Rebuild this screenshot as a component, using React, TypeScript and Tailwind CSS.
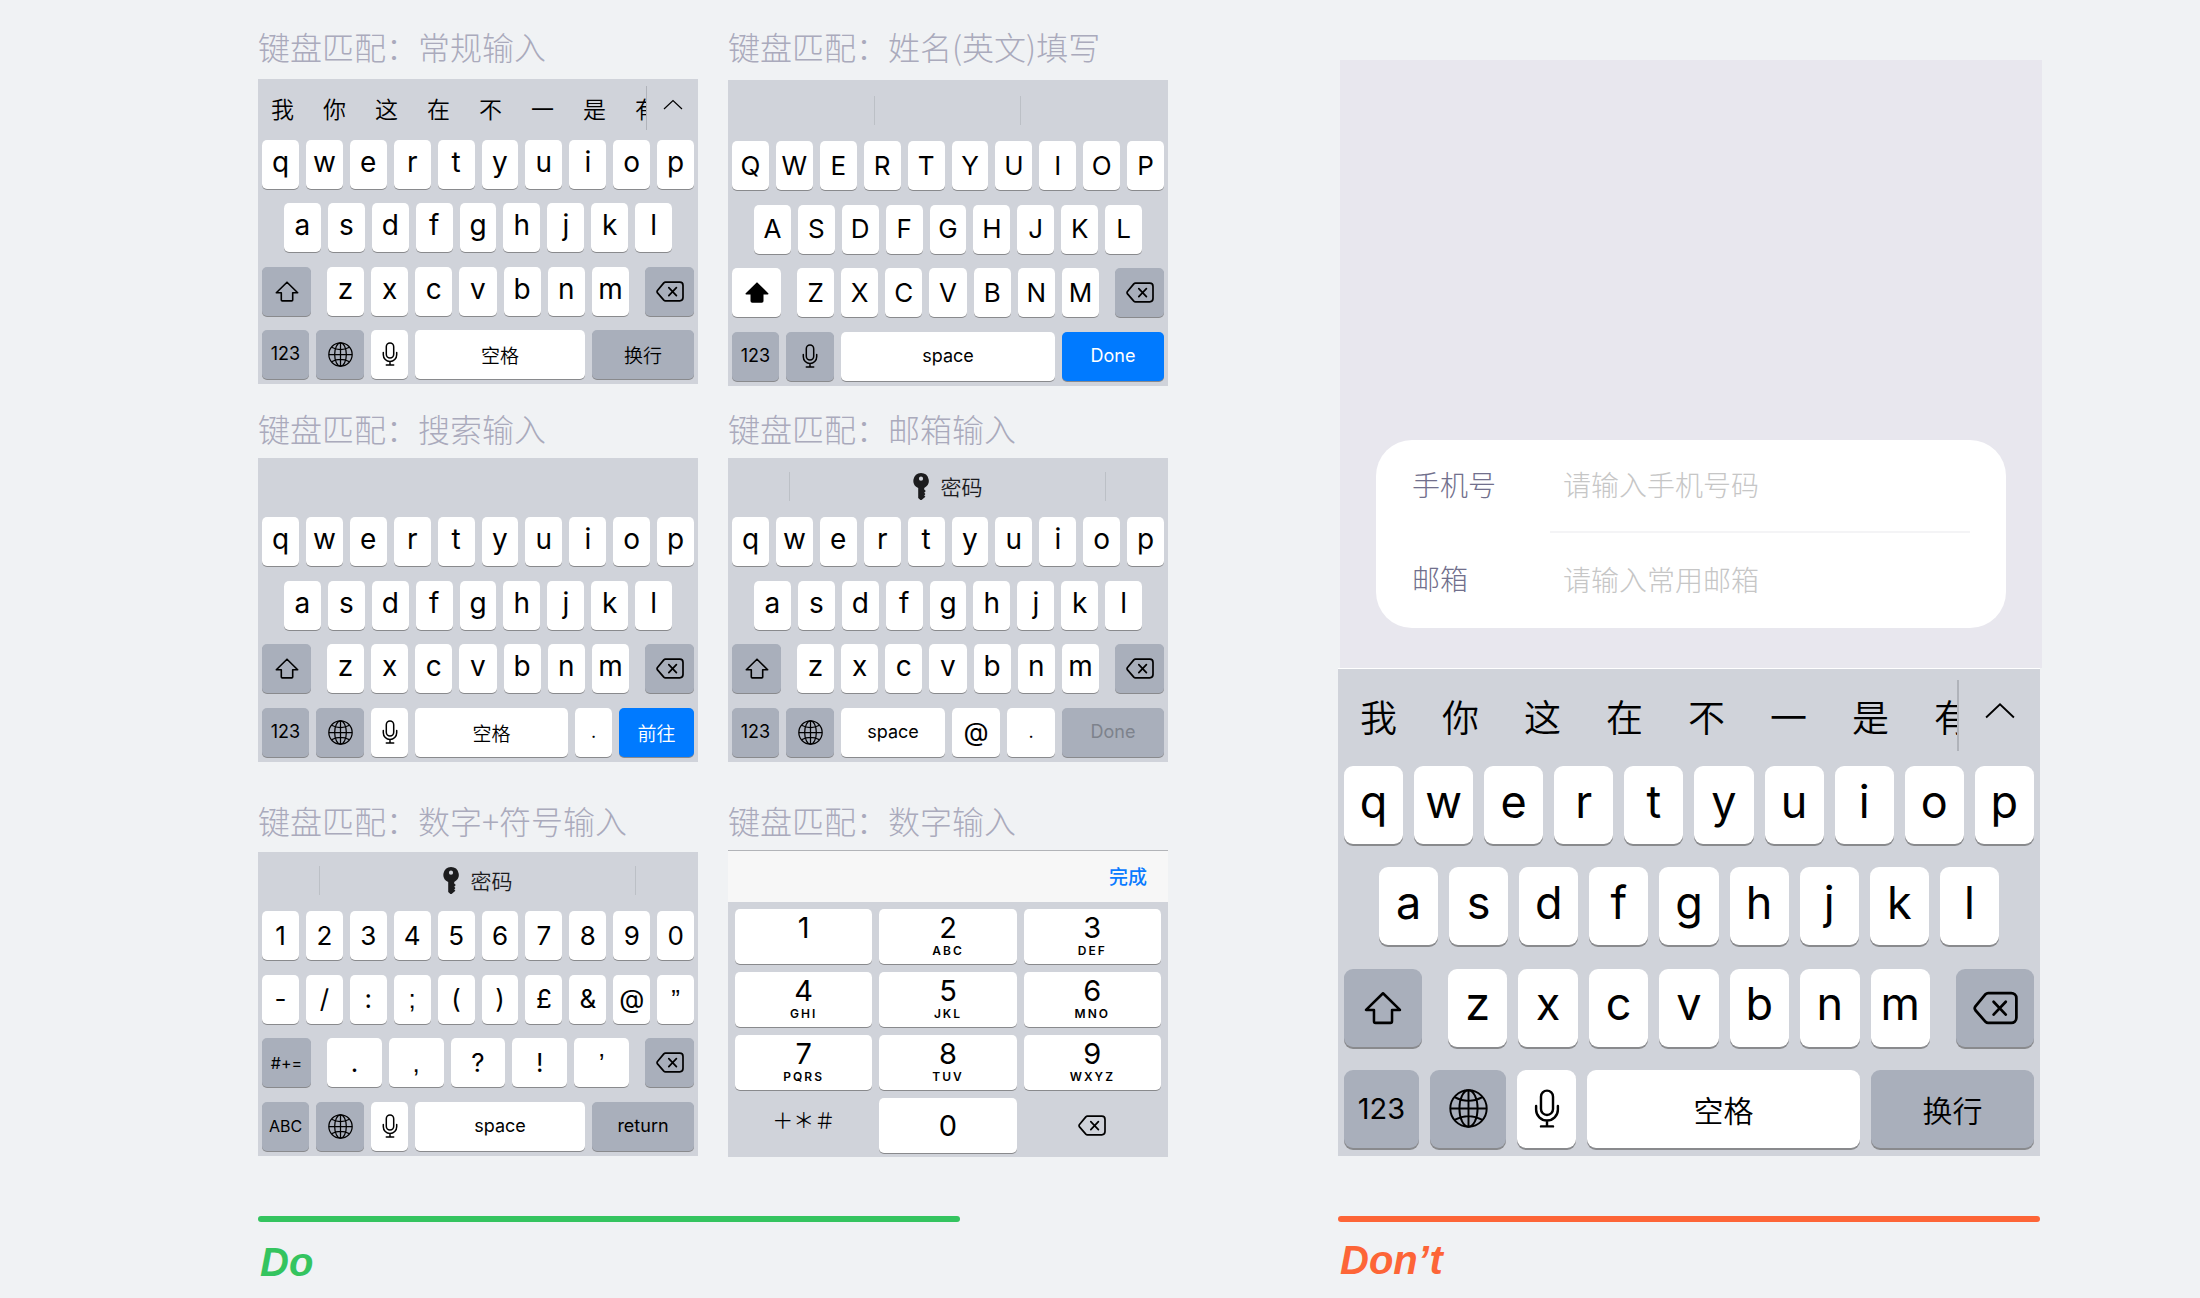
import type { ReactNode } from "react";
import clsx from "clsx";

type Size = "sm" | "lg";
type Tone = "light" | "dark" | "blue" | "disabled";

const sizes = {
  sm: {
    key: "h-[49px] rounded-[5px] shadow-[0_1px_0_#898a8d]",
    lower: "text-[28px] pb-[5px]",
    upper: "text-[26px]",
    label: "text-[18px]",
    cjk: "text-[19px]",
    small: "text-[16px]",
    gap: "gap-[7px]",
    keys: "px-1 pb-[5px]",
    indent: "px-[22px]",
    middle: "mx-4 gap-[7px]",
    shift: "w-[49px]",
    switch: "w-[47px]",
    globe: "w-[48px]",
    mic: "w-[37px]",
    enter: "w-[102px]",
  },
  lg: {
    key: "h-[78px] rounded-[9px] shadow-[0_2px_0_#898a8d]",
    lower: "text-[45px] pb-[8px]",
    upper: "text-[42px]",
    label: "text-[29px]",
    cjk: "text-[30px]",
    small: "text-[26px]",
    gap: "gap-[11px]",
    keys: "px-[6px] pb-[8px]",
    indent: "px-[35px]",
    middle: "mx-[26px] gap-[11px]",
    shift: "w-[78px]",
    switch: "w-[75px]",
    globe: "w-[76px]",
    mic: "w-[59px]",
    enter: "w-[163px]",
  },
};

const tones: Record<Tone, string> = {
  light: "bg-white text-black",
  dark: "bg-[#a9afbb] text-black",
  blue: "bg-[#007aff] text-white",
  disabled: "bg-[#a9afbb] text-[#7d828c]",
};

const cjkFont = "font-['Noto_Sans_CJK_SC',sans-serif]";

const ShiftIcon = ({ size, filled }: { size: Size; filled?: boolean }) => (
  <svg
    viewBox="0 0 24 21"
    className={size === "lg" ? "w-[38px] h-[34px]" : "w-6 h-[21px]"}
    fill={filled ? "currentColor" : "none"}
    stroke="currentColor"
    strokeWidth="1.6"
    strokeLinejoin="round"
  >
    <path d="M12 1.2 1.3 11.7h5v7.2q0 1 1 1h9.4q1 0 1-1v-7.2h5Z" />
  </svg>
);

const DeleteIcon = ({ size }: { size: Size }) => (
  <svg
    viewBox="0 0 28 21"
    className={size === "lg" ? "w-[45px] h-[34px]" : "w-7 h-[21px]"}
    fill="none"
    stroke="currentColor"
    strokeWidth="1.7"
    strokeLinejoin="round"
    strokeLinecap="round"
  >
    <path d="M9.4 1.2h14.4a3.2 3.2 0 0 1 3.2 3.2v12.2a3.2 3.2 0 0 1-3.2 3.2H9.4q-.9 0-1.6-.7l-6.3-7.2q-.9-1.2 0-2.4l6.3-7.6q.7-.7 1.6-.7Z" />
    <path d="m12.8 6.6 7.6 8M20.4 6.6l-7.6 8" />
  </svg>
);

const GlobeIcon = ({ size }: { size: Size }) => (
  <svg
    viewBox="0 0 24 24"
    className={size === "lg" ? "w-[39px] h-[39px]" : "w-[25px] h-[25px]"}
    fill="none"
    stroke="currentColor"
    strokeWidth="1.2"
  >
    <circle cx="12" cy="12" r="11.2" />
    <ellipse cx="12" cy="12" rx="5.6" ry="11.2" />
    <path d="M12 .8v22.4M.8 12h22.4M3.4 5q8.6 4.6 17.2 0M3.4 19q8.6-4.6 17.2 0" />
  </svg>
);

const MicIcon = ({ size }: { size: Size }) => (
  <svg
    viewBox="0 0 16 24"
    className={size === "lg" ? "w-[26px] h-[39px]" : "w-4 h-6"}
    fill="none"
    stroke="currentColor"
    strokeWidth="1.5"
    strokeLinecap="round"
  >
    <rect x="4.3" y="1" width="7.4" height="15" rx="3.7" />
    <path d="M1.3 10.5v2.2a6.7 6.7 0 0 0 13.4 0v-2.2M8 19.4v3.4M4.3 23h7.4" />
  </svg>
);

const KeyIcon = () => (
  <svg viewBox="0 0 16 27" className="w-4 h-[27px]" fill="currentColor">
    <path
      fillRule="evenodd"
      d="M8 0a7.8 7.8 0 0 1 3.2 14.9v1.5l1.6 1.6-1.6 1.7 1.2 1.4-1.2 1.3 1.2 1.4L8.6 27H7.4l-2.2-1.9V15A7.8 7.8 0 0 1 8 0Zm0 3.6a2.1 2.1 0 1 0 0 4.2 2.1 2.1 0 0 0 0-4.2Z"
    />
  </svg>
);

const ChevronIcon = ({ size }: { size: Size }) => (
  <svg
    viewBox="0 0 20 11"
    className={size === "lg" ? "w-[32px] h-[17px]" : "w-5 h-[11px]"}
    fill="none"
    stroke="currentColor"
    strokeWidth="1.2"
  >
    <path d="m1 10 9-8.5L19 10" />
  </svg>
);

type KeyProps = {
  size: Size;
  tone?: Tone;
  text?: "lower" | "upper" | "label" | "cjk" | "small";
  className?: string;
  label?: string;
  children: ReactNode;
};

const Key = ({ size, tone = "light", text = "label", className, label, children }: KeyProps) => (
  <button
    type="button"
    aria-label={label}
    disabled={tone === "disabled"}
    className={clsx(
      "flex items-center justify-center leading-none",
      sizes[size].key,
      sizes[size][text],
      tones[tone],
      text === "cjk" ? cjkFont : "font-['Inter',sans-serif]",
      text === "cjk" ? "font-[350]" : "font-[380]",
      className ?? "flex-1 min-w-0",
    )}
  >
    {children}
  </button>
);

const Letters = ({ size, letters }: { size: Size; letters: string }) => {
  const text = /[a-z]/.test(letters) ? "lower" : "upper";
  return (
    <>
      {letters.split("").map((letter) => (
        <Key key={letter} size={size} text={text}>
          {/* Inter draws these as straight wedges */}
          {"”’,;".includes(letter) ? (
            <span className="font-['Liberation_Sans',sans-serif]">{letter}</span>
          ) : (
            letter
          )}
        </Key>
      ))}
    </>
  );
};

type KeyboardProps = {
  size?: Size;
  height: string;
  barHeight: string;
  bar?: ReactNode;
  rows: string[];
  shift?: ReactNode;
  children: ReactNode;
};

const Keyboard = ({ size = "sm", height, barHeight, bar, rows, shift, children }: KeyboardProps) => {
  const s = sizes[size];
  return (
    <div className={clsx("flex flex-col bg-[#d0d3da]", height)}>
      <div className={clsx("flex shrink-0", barHeight)}>{bar}</div>
      <div className={clsx("flex-1 flex flex-col justify-between", s.keys)}>
        <div className={clsx("flex", s.gap)}>
          <Letters size={size} letters={rows[0]} />
        </div>
        <div className={clsx("flex", s.gap, rows[1].length < 10 && s.indent)}>
          <Letters size={size} letters={rows[1]} />
        </div>
        <div className="flex">
          {shift ?? (
            <Key size={size} tone="dark" className={s.shift} label="shift">
              <ShiftIcon size={size} />
            </Key>
          )}
          <div className={clsx("flex-1 flex", s.middle)}>
            <Letters size={size} letters={rows[2]} />
          </div>
          <Key size={size} tone="dark" className={s.shift} label="delete">
            <DeleteIcon size={size} />
          </Key>
        </div>
        <div className={clsx("flex", s.gap)}>{children}</div>
      </div>
    </div>
  );
};

const SwitchKey = ({ size = "sm" }: { size?: Size }) => (
  <Key size={size} tone="dark" className={sizes[size].switch}>
    123
  </Key>
);

const GlobeKey = ({ size = "sm" }: { size?: Size }) => (
  <Key size={size} tone="dark" className={sizes[size].globe} label="globe">
    <GlobeIcon size={size} />
  </Key>
);

const MicKey = ({ size = "sm" }: { size?: Size }) => (
  <Key size={size} className={sizes[size].mic} label="dictation">
    <MicIcon size={size} />
  </Key>
);

const words = ["我", "你", "这", "在", "不", "一", "是", "有"];

const WordBar = ({ size }: { size: Size }) => {
  const lg = size === "lg";
  return (
    <div className={clsx("flex-1 min-w-0 flex font-[350]", cjkFont)}>
      <div
        className={clsx(
          "flex-1 min-w-0 overflow-hidden flex items-center pb-[3px]",
          lg ? "pl-[22px] gap-[45px] text-[37px]" : "pl-[13px] gap-[29px] text-[23px]",
        )}
      >
        {words.map((word) => (
          <button key={word} type="button" className="shrink-0 leading-none">
            {word}
          </button>
        ))}
      </div>
      <button
        type="button"
        aria-label="more"
        className={clsx(
          "flex justify-center border-l border-[#b0b3ba]",
          lg
            ? "w-[83px] h-[71px] mt-[11px] pt-[22px] border-l-2"
            : "w-[52px] h-[44px] mt-[7px] pt-[13px]",
        )}
      >
        <ChevronIcon size={size} />
      </button>
    </div>
  );
};

const PasswordBar = () => (
  <div className="flex-1 flex items-center justify-between pl-[61px] pr-[62px] pb-[3px]">
    <div className="w-px h-[29px] bg-[#bcc0c6]"></div>
    <button
      type="button"
      className={clsx("flex items-center gap-3 text-[21px] leading-none font-[350] text-[#1c1c1e]", cjkFont)}
    >
      <KeyIcon />
      密码
    </button>
    <div className="w-px h-[29px] bg-[#bcc0c6]"></div>
  </div>
);

const ChineseKeyboard = ({ size = "sm" }: { size?: Size }) => (
  <Keyboard
    size={size}
    height={size === "lg" ? "h-[487px]" : "h-[305px]"}
    barHeight={size === "lg" ? "h-[97px]" : "h-[61px]"}
    bar={<WordBar size={size} />}
    rows={["qwertyuiop", "asdfghjkl", "zxcvbnm"]}
  >
    <SwitchKey size={size} />
    <GlobeKey size={size} />
    <MicKey size={size} />
    <Key size={size} text="cjk">
      空格
    </Key>
    <Key size={size} tone="dark" text="cjk" className={sizes[size].enter}>
      换行
    </Key>
  </Keyboard>
);

const NameKeyboard = () => (
  <Keyboard
    height="h-[306px]"
    barHeight="h-[61px]"
    bar={
      <div className="flex-1 grid grid-cols-3 items-center">
        <div className="h-[29px] border-r border-[#bcc0c6]"></div>
        <div className="h-[29px] border-r border-[#bcc0c6]"></div>
      </div>
    }
    rows={["QWERTYUIOP", "ASDFGHJKL", "ZXCVBNM"]}
    shift={
      <Key size="sm" className="w-[49px]" label="shift">
        <ShiftIcon size="sm" filled />
      </Key>
    }
  >
    <SwitchKey />
    <Key size="sm" tone="dark" className="w-[48px]" label="dictation">
      <MicIcon size="sm" />
    </Key>
    <Key size="sm">space</Key>
    <Key size="sm" tone="blue" className="w-[102px]">
      Done
    </Key>
  </Keyboard>
);

const SearchKeyboard = () => (
  <Keyboard
    height="h-[304px]"
    barHeight="h-[59px]"
    rows={["qwertyuiop", "asdfghjkl", "zxcvbnm"]}
  >
    <SwitchKey />
    <GlobeKey />
    <MicKey />
    <Key size="sm" text="cjk">
      空格
    </Key>
    <Key size="sm" className="w-[37px]">
      .
    </Key>
    <Key size="sm" tone="blue" text="cjk" className="w-[75px]">
      前往
    </Key>
  </Keyboard>
);

const EmailKeyboard = () => (
  <Keyboard
    height="h-[304px]"
    barHeight="h-[59px]"
    bar={<PasswordBar />}
    rows={["qwertyuiop", "asdfghjkl", "zxcvbnm"]}
  >
    <SwitchKey />
    <GlobeKey />
    <Key size="sm">space</Key>
    <Key size="sm" text="upper" className="w-[48px]">
      @
    </Key>
    <Key size="sm" className="w-[48px]">
      .
    </Key>
    <Key size="sm" tone="disabled" className="w-[102px]">
      Done
    </Key>
  </Keyboard>
);

const SymbolKeyboard = () => (
  <Keyboard
    height="h-[304px]"
    barHeight="h-[59px]"
    bar={<PasswordBar />}
    rows={["1234567890", "-/:;()£&@”", ".,?!’"]}
    shift={
      <Key size="sm" tone="dark" text="small" className="w-[49px]">
        #+=
      </Key>
    }
  >
    <Key size="sm" tone="dark" text="small" className="w-[47px]">
      ABC
    </Key>
    <GlobeKey />
    <MicKey />
    <Key size="sm">space</Key>
    <Key size="sm" tone="dark" className="w-[102px]">
      return
    </Key>
  </Keyboard>
);

const digits = [
  ["1", ""],
  ["2", "ABC"],
  ["3", "DEF"],
  ["4", "GHI"],
  ["5", "JKL"],
  ["6", "MNO"],
  ["7", "PQRS"],
  ["8", "TUV"],
  ["9", "WXYZ"],
];

const NumberPad = () => (
  <div className="font-['Inter',sans-serif]">
    <div className="h-[52px] flex items-center justify-end pr-[21px] pb-[2px] bg-[#f7f7f7] border-t border-[#b2b4b8]">
      <button
        type="button"
        className={clsx("text-[19px] leading-none font-medium text-[#0a7aff]", cjkFont)}
      >
        完成
      </button>
    </div>
    <div className="grid grid-cols-3 gap-x-[7px] gap-y-2 px-[7px] pt-[7px] pb-1 bg-[#d0d3da]">
      {digits.map(([digit, letters]) => (
        <button
          key={digit}
          type="button"
          className="h-[55px] rounded-[5px] bg-white shadow-[0_1px_0_#898a8d] flex flex-col items-center pt-[5px]"
        >
          <span className="text-[29px] leading-[28px] font-[380]">{digit}</span>
          <span className="text-[12px] leading-[18px] font-semibold tracking-[2px]">{letters}</span>
        </button>
      ))}
      <button type="button" className={clsx("h-[55px] pb-3 text-[21px] leading-none font-[350]", cjkFont)}>
        ＋＊＃
      </button>
      <button
        type="button"
        className="h-[55px] rounded-[5px] bg-white shadow-[0_1px_0_#898a8d] text-[29px] leading-none font-[380]"
      >
        0
      </button>
      <button type="button" aria-label="delete" className="h-[55px] flex items-center justify-center">
        <DeleteIcon size="sm" />
      </button>
    </div>
  </div>
);

const Example = ({ title, gap, children }: { title: string; gap: string; children: ReactNode }) => (
  <section className={clsx("flex flex-col", gap)}>
    <h2 className={clsx("text-[32px] leading-[45px] font-light text-[#aaaabc] whitespace-nowrap", cjkFont)}>
      {title}
    </h2>
    {children}
  </section>
);

type FieldProps = {
  id: string;
  type: string;
  label: string;
  placeholder: string;
  line?: boolean;
};

const Field = ({ id, type, label, placeholder, line }: FieldProps) => (
  <div className={clsx("flex px-[36px]", line ? "h-[93px]" : "h-[95px]")}>
    <label htmlFor={id} className="w-[138px] pb-[5px] flex items-center text-[#716f8c]">
      {label}
    </label>
    <input
      id={id}
      type={type}
      placeholder={placeholder}
      className={clsx(
        "flex-1 min-w-0 pl-[13px] pb-[3px] bg-transparent outline-none placeholder:text-[#c6c6c6]",
        line && "border-b-2 border-[#f4f4f6]",
      )}
    />
  </div>
);

const App = () => {
  return (
    <div className="min-h-screen bg-[#f0f2f4] text-black grid grid-cols-[minmax(0,910fr)_minmax(0,704fr)] gap-x-[170px] pl-[258px] pr-[158px]">
      <div className="pt-6">
        <div className="grid grid-cols-2 items-start gap-x-[30px]">
          <Example title="键盘匹配：常规输入" gap="gap-[10px]">
            <ChineseKeyboard />
          </Example>
          <Example title="键盘匹配：姓名(英文)填写" gap="gap-[11px]">
            <NameKeyboard />
          </Example>
        </div>
        <div className="grid grid-cols-2 items-start gap-x-[30px] mt-5">
          <Example title="键盘匹配：搜索输入" gap="gap-[7px]">
            <SearchKeyboard />
          </Example>
          <Example title="键盘匹配：邮箱输入" gap="gap-[7px]">
            <EmailKeyboard />
          </Example>
        </div>
        <div className="grid grid-cols-2 items-start gap-x-[30px] mt-9">
          <Example title="键盘匹配：数字+符号输入" gap="gap-[9px]">
            <SymbolKeyboard />
          </Example>
          <Example title="键盘匹配：数字输入" gap="gap-[7px]">
            <NumberPad />
          </Example>
        </div>
        <div className="w-full max-w-[702px] h-[6px] mt-[59px] rounded-full bg-[#34c45f]"></div>
        <p className="mt-5 pl-[2px] text-[40px] leading-10 font-bold italic text-[#34c45f] font-['Liberation_Sans',sans-serif]">
          Do
        </p>
      </div>

      <div className="pt-[60px]">
        <div className="h-[608px] ml-[2px] px-[36px] pb-[40px] flex flex-col justify-end bg-[#e8e7ee]">
          <form className={clsx("rounded-[36px] bg-white text-[28px] font-light", cjkFont)}>
            <Field id="phone" type="tel" label="手机号" placeholder="请输入手机号码" line />
            <Field id="email" type="email" label="邮箱" placeholder="请输入常用邮箱" />
          </form>
        </div>
        <div className="mr-[2px] border-t border-white">
          <ChineseKeyboard size="lg" />
        </div>
        <div className="h-[6px] mt-[60px] mr-[2px] rounded-full bg-[#fd6537]"></div>
        <p className="mt-[18px] pl-[2px] text-[40px] leading-10 font-bold italic text-[#fd6537] font-['Liberation_Sans',sans-serif]">
          Don’t
        </p>
      </div>
    </div>
  );
};

export default App;
